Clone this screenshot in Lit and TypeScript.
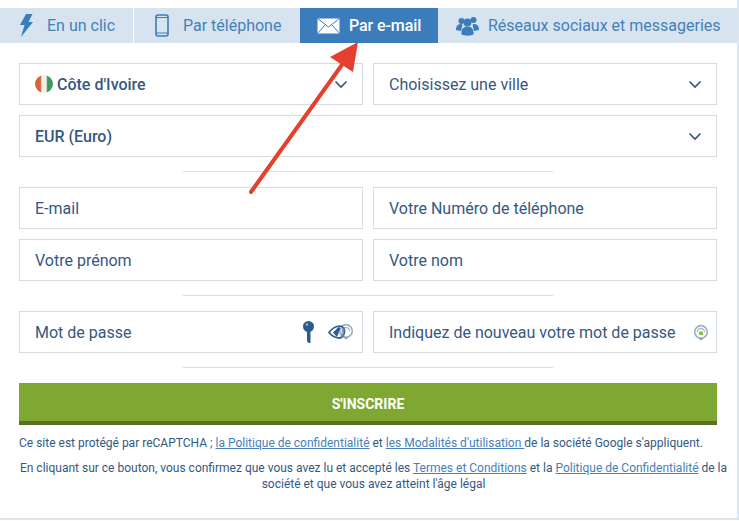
import { LitElement, html, css, svg } from "lit";
import { customElement } from "lit/decorators.js";

const chevron = html`<svg class="chev" width="14" height="9" viewBox="0 0 14 9"><path d="M1.500 1.500 7 7l5.500-5.500" fill="none" stroke="#2f5680" stroke-width="1.600"/></svg>`;

const recaptcha = svg`<circle cx="8" cy="8" r="6.300" fill="none" stroke="#9db3c4" stroke-width="1.700"/><path d="M4.500 8a3.500 3.500 0 0 1 7 0" fill="none" stroke="#a9bccb" stroke-width="1.300"/><path d="M5.500 14h5L8 16.500z" fill="#7f9bb0"/>`;

@customElement("app-root")
export class AppRoot extends LitElement {
  static styles = css`
    :host { display: block; width: 739px; height: 521px; background: #fff; font-family: Roboto, "Liberation Sans", sans-serif; color: #34597f; overflow: hidden; }
    .panel { width: 739px; height: 520px; box-sizing: border-box; padding-top: 8px; border-right: 2px solid #dbe6f0; border-bottom: 2px solid #dbe6f0; position: relative; }
    .tabs { display: flex; height: 35px; background: #d7e4ef; }
    .tab { display: flex; align-items: center; font-size: 16px; color: #4580bb; box-sizing: border-box; }
    .t1 { width: 134px; padding-left: 19px; gap: 14px; border-right: 1px solid #fff; }
    .t2 { width: 166px; padding-left: 21px; gap: 14px; }
    .t3 { width: 138px; padding-left: 17px; gap: 9px; background: #3b7cbd; color: #fff; font-weight: 500; }
    .t3 span { letter-spacing: -0.1px; }
    .t4 { flex: 1; padding-left: 18px; gap: 10px; }
    .t4 svg { margin-right: -1px; }
    form { display: flex; flex-direction: column; padding: 20px 0 0 19px; }
    .row { display: grid; grid-template-columns: 344px 344px; gap: 10px; margin-bottom: 10px; }
    .field { height: 42px; box-sizing: border-box; border: 1px solid #d5dbde; display: flex; align-items: center; padding: 0 14px 0 15px; font-size: 16px; color: #34597f; white-space: nowrap; }
    .wide { grid-column: 1 / 3; }
    .strong { font-weight: 500; }
    .grow { flex: 1; }
    .flag { width: 18px; height: 18px; border-radius: 50%; margin-right: 4px; background: linear-gradient(90deg, #d9623f 0 30%, #f3efe6 38% 62%, #3c9a62 70%); }
    .rule { width: 370px; height: 1px; background: #d9dee1; align-self: flex-start; margin: 4px 0 15px 164px; }
    .btn { height: 42px; width: 698px; box-sizing: border-box; padding-top: 3px; border-bottom: 4px solid #567222; background: #7ea832; color: #fff; font-size: 14px; font-weight: 700; display: flex; align-items: center; justify-content: center; }
    .legal { font-size: 12px; line-height: 16px; color: #34597f; }
    .captcha { margin-top: 10px; }
    .terms { margin-top: 9px; text-align: center; width: 709px; }
    a { color: #4580bb; text-decoration: underline; }
    .pw { padding-right: 8px; }
    .key { margin-right: 14px; }
    .again { padding-right: 7px; }
    .arrow { position: absolute; left: 0; top: 0; pointer-events: none; }
  `;

  render() {
    return html`<div class="panel">
      <div class="tabs">
        <div class="tab t1"><svg width="14" height="23" viewBox="0 0 14 23"><path d="M7 0h6.500L9.500 8H14L2 23 5.500 11H1z" fill="#3b7cbd"/></svg>En un clic</div>
        <div class="tab t2"><svg width="14" height="23" viewBox="0 0 14 23"><rect x="1" y="1" width="12" height="21" rx="2" fill="none" stroke="#3b7cbd" stroke-width="1.600"/><path d="M1 3.500h12M1 19h12" stroke="#3b7cbd" stroke-width="1"/></svg>Par téléphone</div>
        <div class="tab t3"><svg width="23" height="16" viewBox="0 0 23 16"><rect x=".5" y=".5" width="22" height="15" fill="#fff"/><path d="M.5.5 11.500 9 22.500.5M.5 15.500 8.500 6.500M22.500 15.500 14.500 6.500" fill="none" stroke="#3b7cbd" stroke-width="1"/></svg><span>Par e-mail</span></div>
        <div class="tab t4"><svg width="23" height="20" viewBox="0 0 23 20" fill="#3b7cbd"><circle cx="5.500" cy="5" r="3"/><circle cx="17.500" cy="4" r="3"/><circle cx="11.500" cy="6.500" r="4"/><path d="M0 14c0-4 2-6 5-6l1.500.5-1.500 6.500zM23 14c0-4-2-6-5-6l-1.500.5 1.500 6.500zM5.500 18.500c-.5-5 1.500-8 6-8s6.500 3 6 8c-3 1.500-9 1.500-12 0z"/></svg>Réseaux sociaux et messageries</div>
      </div>
      <form>
        <div class="row">
          <div class="field strong"><span class="flag"></span><span class="grow">Côte d'Ivoire</span>${chevron}</div>
          <div class="field"><span class="grow">Choisissez une ville</span>${chevron}</div>
        </div>
        <div class="row"><div class="field wide strong"><span class="grow">EUR (Euro)</span>${chevron}</div></div>
        <div class="rule"></div>
        <div class="row"><div class="field">E-mail</div><div class="field">Votre Numéro de téléphone</div></div>
        <div class="row"><div class="field">Votre prénom</div><div class="field">Votre nom</div></div>
        <div class="rule"></div>
        <div class="row">
          <div class="field pw"><span class="grow">Mot de passe</span>
            <svg class="key" width="11" height="22" viewBox="0 0 11 22"><circle cx="5.500" cy="5.500" r="5.500" fill="#2b5c8c"/><path d="M4 9h3.500v13H5.500L4 20z" fill="#2b5c8c"/><circle cx="4" cy="3.500" r="1.300" fill="#8fb0cc"/></svg>
            <svg width="26" height="18" viewBox="0 0 26 18"><g transform="translate(10 0)">${recaptcha}</g><path d="M1 9.500C4 5.500 8 3 12 3c3 0 5 3 4.500 6.500S13 15.500 10 15 4 13 1 9.500z" fill="none" stroke="#2b5c8c" stroke-width="1.700"/><path d="M5 9.500l5.500-5.500 2 1L9 14z" fill="#2b5c8c"/><path d="M14 4l3 1-1 9-3 1z" fill="#5f86a8" opacity=".7"/></svg>
          </div>
          <div class="field again"><span class="grow">Indiquez de nouveau votre mot de passe</span><svg width="16" height="17" viewBox="0 0 16 17">${recaptcha}<rect x="6" y="7.500" width="4" height="3.500" fill="#8bbf4a"/></svg></div>
        </div>
        <div class="rule"></div>
        <div class="btn">S'INSCRIRE</div>
        <div class="legal captcha">Ce site est protégé par reCAPTCHA ; <a>la Politique de confidentialité</a> et <a>les Modalités d'utilisation </a>de la société Google s'appliquent.</div>
        <div class="legal terms">En cliquant sur ce bouton, vous confirmez que vous avez lu et accepté les <a>Termes et Conditions</a> et la <a>Politique de Confidentialité</a> de la société et que vous avez atteint l'âge légal</div>
      </form>
      <svg class="arrow" width="739" height="521" viewBox="0 0 739 521"><path d="M251 192 344 62" stroke="#e53f2e" stroke-width="4" stroke-linecap="round"/><path d="M358 42 330 57 353 72z" fill="#e53f2e"/></svg>
    </div>`;
  }
}
